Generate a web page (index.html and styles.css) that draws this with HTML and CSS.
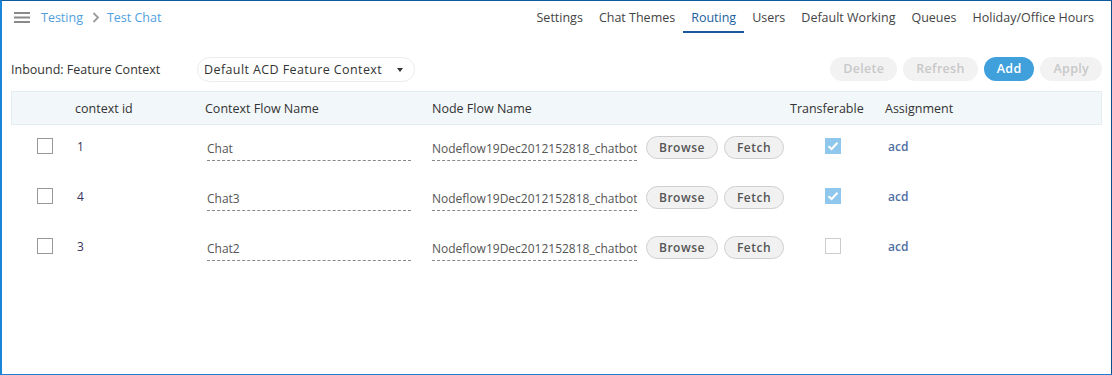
FILE: index.html
```html
<!DOCTYPE html>
<html>
<head>
	<title>Test Chat - Routing</title>
	<link rel="stylesheet" href="styles.css">
</head>
<body>
	<div class="frame">
		<header class="topbar">
			<div class="crumbs">
				<span class="menu-icon">
					<svg width="16" height="11" viewBox="0 0 16 11"><rect y="0" width="16" height="2" fill="#8a8a8a"/><rect y="4.5" width="16" height="2" fill="#8a8a8a"/><rect y="9" width="16" height="2" fill="#8a8a8a"/></svg>
				</span>
				<a class="crumb">Testing</a>
				<svg class="crumb-sep" width="8" height="11" viewBox="0 0 8 11"><path d="M1.5 1 L6 5.5 L1.5 10" fill="none" stroke="#9a9a9a" stroke-width="1.8"/></svg>
				<a class="crumb">Test Chat</a>
			</div>
			<nav class="tabs">
				<a class="tab">Settings</a>
				<a class="tab">Chat Themes</a>
				<a class="tab active">Routing</a>
				<a class="tab">Users</a>
				<a class="tab">Default Working</a>
				<a class="tab">Queues</a>
				<a class="tab">Holiday/Office Hours</a>
			</nav>
		</header>

		<div class="toolbar">
			<label class="context-label">Inbound: Feature Context</label>
			<div class="context-select">
				<span>Default ACD Feature Context</span>
				<span class="caret"></span>
			</div>
			<div class="actions">
				<button class="pill disabled">Delete</button>
				<button class="pill disabled">Refresh</button>
				<button class="pill primary">Add</button>
				<button class="pill disabled">Apply</button>
			</div>
		</div>

		<div class="grid">
			<div class="grid-head">
				<span></span>
				<span>context id</span>
				<span>Context Flow Name</span>
				<span>Node Flow Name</span>
				<span>Transferable</span>
				<span>Assignment</span>
			</div>
			<div class="grid-body"></div>
		</div>
	</div>

	<script>
		let contexts = [
			{ id: 1, flow: 'Chat', node: 'Nodeflow19Dec2012152818_chatbot', transferable: true, assignment: 'acd' },
			{ id: 4, flow: 'Chat3', node: 'Nodeflow19Dec2012152818_chatbot', transferable: true, assignment: 'acd' },
			{ id: 3, flow: 'Chat2', node: 'Nodeflow19Dec2012152818_chatbot', transferable: false, assignment: 'acd' }
		]

		let gridBody = () => document.querySelector('.grid-body')

		let buildCell = (className) => {
			let cell = document.createElement('div')
			cell.className = 'cell ' + className
			return cell
		}

		let buildBox = (className) => {
			let box = document.createElement('span')
			box.className = 'box ' + className
			return box
		}

		let buildInput = (value) => {
			let input = document.createElement('input')
			input.type = 'text'
			input.className = 'line-input'
			input.value = value
			return input
		}

		let buildButton = (text) => {
			let button = document.createElement('button')
			button.className = 'pill small'
			button.textContent = text
			return button
		}

		let addRow = (ctx) => {
			let row = document.createElement('div')
			row.className = 'grid-row'

			let select = buildCell('select')
			select.appendChild(buildBox('plain'))
			row.appendChild(select)

			let id = buildCell('id')
			id.textContent = ctx.id
			row.appendChild(id)

			let flow = buildCell('flow')
			flow.appendChild(buildInput(ctx.flow))
			row.appendChild(flow)

			let node = buildCell('node')
			node.appendChild(buildInput(ctx.node))
			node.appendChild(buildButton('Browse'))
			node.appendChild(buildButton('Fetch'))
			row.appendChild(node)

			let transfer = buildCell('transfer')
			let box = buildBox(ctx.transferable ? 'checked' : 'light')
			if (ctx.transferable) {
				box.innerHTML = '<svg width="12" height="10" viewBox="0 0 12 10"><path d="M1.5 5.2 L4.6 8 L10.5 1.8" fill="none" stroke="#fff" stroke-width="2"/></svg>'
			}
			transfer.appendChild(box)
			row.appendChild(transfer)

			let assign = buildCell('assign')
			assign.textContent = ctx.assignment
			row.appendChild(assign)

			gridBody().appendChild(row)
		}

		contexts.forEach(addRow)
	</script>
</body>
</html>
```

FILE: styles.css
```css
* {
	box-sizing: border-box;
}
html, body {
	margin: 0;
	background: #fff;
}
body {
	font-family: "Open Sans", "Noto Sans", sans-serif;
	font-size: 12px;
	color: #333;
}
.frame {
	height: 375px;
	border: 1px solid #1e7fd0;
	border-left: 2px solid #1a86d8;
	border-top-color: #0d5a9e;
	border-right-color: #0b4f8c;
	padding: 0 9px;
}

/* top bar */
.topbar {
	display: flex;
	align-items: flex-start;
	justify-content: space-between;
	height: 34px;
}
.crumbs {
	display: flex;
	align-items: center;
	height: 32px;
	padding-left: 3px;
}
.menu-icon {
	display: flex;
	margin-right: 11px;
}
.crumb {
	color: #4f9fe0;
	font-size: 12.5px;
}
.crumb-sep {
	margin: 0 7px 0 9px;
}
.tabs {
	display: flex;
	padding-right: 0;
}
.tab {
	display: block;
	padding: 0 8px;
	height: 32px;
	line-height: 34px;
	color: #444;
	font-size: 12.5px;
	font-weight: 500;
	border-bottom: 2px solid transparent;
}
.tab.active {
	color: #1d5f9e;
	border-bottom-color: #1a5a9a;
}

/* toolbar */
.toolbar {
	display: flex;
	align-items: center;
	margin-top: 22px;
	height: 25px;
}
.context-label {
	width: 186px;
	color: #333;
	font-size: 12.5px;
}
.context-select {
	display: flex;
	align-items: center;
	justify-content: space-between;
	width: 218px;
	height: 25px;
	padding: 0 11px 0 6px;
	border: 1px solid #ececec;
	border-radius: 13px;
	font-size: 12.5px;
	color: #333;
	font-weight: 500;
	letter-spacing: 0.4px;
}
.caret {
	width: 0;
	height: 0;
	border-left: 3.5px solid transparent;
	border-right: 3.5px solid transparent;
	border-top: 4px solid #333;
}
.actions {
	display: flex;
	gap: 6px;
	margin-left: auto;
	margin-top: -2px;
}
.pill {
	font-family: inherit;
	font-weight: 600;
	font-size: 12.5px;
	height: 24px;
	padding: 0 12px;
	border-radius: 12px;
	border: 1px solid transparent;
	background: #f0f0f0;
	color: #333;
	letter-spacing: 0.3px;
}
.pill.disabled {
	color: #c8c8c8;
	background: #f2f2f2;
}
.pill.primary {
	background: #3fa0dc;
	color: #fff;
	padding: 0 12px;
}
.pill.small {
	font-size: 12px;
	height: 23px;
	padding: 0 12px;
	border-color: #cfcfcf;
	background: #f1f1f1;
	color: #555;
	letter-spacing: 0.5px;
}

/* grid */
.grid {
	margin-top: 9px;
}
.grid-head, .grid-row {
	display: grid;
	grid-template-columns: 63px 130px 227px 358px 95px 1fr;
	align-items: center;
}
.grid-head {
	height: 34px;
	background: #f2f7fa;
	border: 1px solid #e6edf1;
	font-size: 12.5px;
	color: #333;
}
.grid-row {
	height: 50px;
	padding-bottom: 8px;
}
.cell {
	display: flex;
	align-items: center;
}
.box {
	display: inline-flex;
	align-items: center;
	justify-content: center;
	width: 16px;
	height: 16px;
}
.box.plain {
	border: 1px solid #999;
}
.box.light {
	border: 1px solid #ccc;
}
.box.checked {
	background: #8fc8ec;
}
.select {
	padding-left: 26px;
}
.id {
	padding-left: 3px;
	padding-top: 1px;
	color: #3a3360;
	font-size: 12px;
}
.line-input {
	font-family: inherit;
	font-size: 12px;
	color: #555;
	height: 28px;
	padding: 3px 0 0;
	margin-top: 2px;
	border: none;
	border-bottom: 1px dashed #888;
	outline: none;
	background: transparent;
}
.flow .line-input {
	margin-left: 3px;
	width: 204px;
}
.node .line-input {
	margin-left: 1px;
	width: 205px;
	margin-right: 9px;
}
.node .pill.small {
	margin-top: 2px;
}
.node .pill.small + .pill.small {
	margin-left: 6px;
}
.transfer {
	padding-left: 36px;
}
.assign {
	padding-left: 4px;
	color: #4f6fa3;
	font-weight: 600;
	font-size: 12px;
}
```
